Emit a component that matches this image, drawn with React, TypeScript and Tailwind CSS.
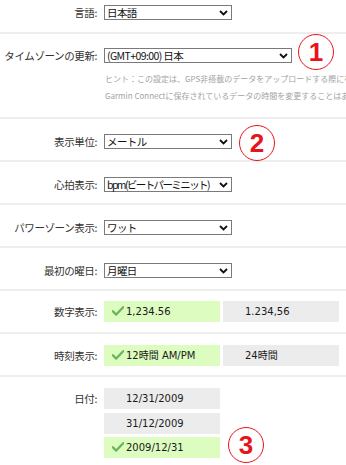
import React from "react";

const labelFont = { fontFamily: '"Noto Sans CJK JP", "Liberation Sans", sans-serif' };

function Chevron() {
    return (
        <svg width="9" height="6" viewBox="0 0 9 6" className="absolute right-[3px] top-[4px]">
            <polyline points="1,1 4.5,4.5 8,1" fill="none" stroke="#111" strokeWidth="1.8" />
        </svg>
    );
}

function Check() {
    return (
        <svg width="12" height="10" viewBox="0 0 12 10" className="absolute left-[8px] top-[5px]">
            <path d="M0.8 5.2 L4.2 8.6 L11.2 1.2" fill="none" stroke="#6cb358" strokeWidth="2.2" strokeLinecap="round" strokeLinejoin="round" />
        </svg>
    );
}

function Marker({ n, className }: { n: number; className: string }) {
    return (
        <div
            className={`absolute w-[36px] h-[36px] rounded-full border-[1.5px] border-[#e8141b] flex items-center justify-center text-[#e8141b] text-[26px] font-bold leading-none ${className}`}
            style={{ fontFamily: '"Liberation Sans", Arial, sans-serif' }}
        >
            {n}
        </div>
    );
}

function Select({ value, width, tight, children }: { value: string; width: string; tight?: boolean; children?: React.ReactNode }) {
    return (
        <div className={`relative h-[15px] ${width} bg-white border border-[#7a7a7a]`}>
            <div
                className={`pl-[2px] text-[10.5px] leading-[13px] text-[#111] whitespace-nowrap ${tight ? "tracking-[-1.6px]" : "tracking-[-0.6px]"}`}
                style={labelFont}
            >
                {value}
            </div>
            <Chevron />
            {children}
        </div>
    );
}

function Label({ text }: { text: string }) {
    return (
        <div
            className="w-[98px] shrink-0 text-right pr-[1px] text-[10.5px] leading-[15px] text-[#333] whitespace-nowrap tracking-[-0.4px]"
            style={labelFont}
        >
            {text}
        </div>
    );
}

function Sep() {
    return <div className="h-[2px] bg-[#eeeeee]" />;
}

function Opt({ text, on, children }: { text: string; on?: boolean; children?: React.ReactNode }) {
    return (
        <div
            className={`relative w-[116px] h-[21px] pl-[22px] text-[10px] leading-[21px] text-[#1a1a1a] ${on ? "bg-[#dcfcc0]" : "bg-[#ececec]"}`}
            style={{ fontFamily: '"DejaVu Sans", "Noto Sans CJK JP", sans-serif' }}
        >
            {on && <Check />}
            {text}
            {children}
        </div>
    );
}

function SelectRow({ label, value, tight, children }: { label: string; value: string; tight?: boolean; children?: React.ReactNode }) {
    return (
        <>
            <div className="flex items-center h-[41px] pt-[15px] pb-[11px]">
                <Label text={label} />
                <div className="ml-[6px]">
                    <Select value={value} width="w-[128px]" tight={tight}>{children}</Select>
                </div>
            </div>
            <Sep />
        </>
    );
}

export default function App() {
    return (
        <div className="w-[346px] h-[465px] bg-white overflow-hidden">
            <div className="flex items-center h-[32px] pt-[5px] pb-[12px]">
                <Label text="言語:" />
                <div className="ml-[6px]">
                    <Select value="日本語" width="w-[128px]" />
                </div>
            </div>
            <Sep />

            <div className="h-[83px] pt-[14px]">
                <div className="flex items-center h-[15px]">
                    <Label text="タイムゾーンの更新:" />
                    <div className="ml-[6px]">
                        <Select value="(GMT+09:00) 日本" width="w-[188px]">
                            <Marker n={1} className="left-[193px] -top-[15px]" />
                        </Select>
                    </div>
                </div>
                <div
                    className="ml-[105px] mt-[7px] text-[8px] leading-[17px] text-[#a3a3a3] whitespace-nowrap overflow-hidden"
                    style={labelFont}
                >
                    <div>ヒント：この設定は、GPS非搭載のデータをアップロードする際に有効で</div>
                    <div>Garmin Connectに保存されているデータの時間を変更することはあり</div>
                </div>
            </div>
            <Sep />

            <SelectRow label="表示単位:" value="メートル">
                <Marker n={2} className="left-[134px] -top-[10px]" />
            </SelectRow>
            <SelectRow label="心拍表示:" value="bpm(ビートパーミニット)" tight />
            <SelectRow label="パワーゾーン表示:" value="ワット" />
            <SelectRow label="最初の曜日:" value="月曜日" />

            <div className="flex items-center h-[41px] pt-[10px] pb-[10px]">
                <Label text="数字表示:" />
                <div className="ml-[6px] flex gap-[3px]">
                    <Opt text="1,234.56" on />
                    <Opt text="1.234,56" />
                </div>
            </div>
            <Sep />

            <div className="flex items-center h-[41px] pt-[11px] pb-[9px]">
                <Label text="時刻表示:" />
                <div className="ml-[6px] flex gap-[3px]">
                    <Opt text="12時間 AM/PM" on />
                    <Opt text="24時間" />
                </div>
            </div>
            <Sep />

            <div className="flex items-start pt-[11px]">
                <div className="h-[21px] flex items-center">
                    <Label text="日付:" />
                </div>
                <div className="ml-[6px] flex flex-col gap-[3.5px]">
                    <Opt text="12/31/2009" />
                    <Opt text="31/12/2009" />
                    <Opt text="2009/12/31" on>
                        <Marker n={3} className="left-[124px] -top-[10px]" />
                    </Opt>
                </div>
            </div>
        </div>
    );
}
